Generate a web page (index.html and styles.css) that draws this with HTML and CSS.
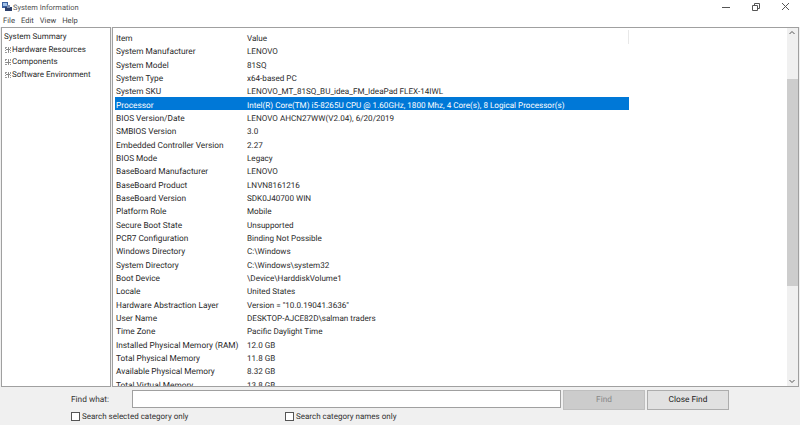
FILE: index.html
```html
<!DOCTYPE html>
<html lang="en">
<head>
  <meta charset="UTF-8">
  <title>System Information</title>
  <link rel="stylesheet" href="styles.css">
</head>
<body>
  <div class="window">
    <div class="titlebar">
      <svg class="app-icon" width="10" height="10" viewBox="0 0 10 10">
        <rect x="0" y="0" width="6" height="6" fill="#3a5f9e"/>
        <rect x="1" y="1" width="4" height="3" fill="#9fc0e8"/>
        <rect x="3" y="5" width="7" height="4" fill="#2c3f6b"/>
        <rect x="5" y="3" width="3" height="3" fill="#7d8fb0"/>
      </svg>
      <span class="title">System Information</span>
      <div class="win-controls">
        <svg width="10" height="10" viewBox="0 0 10 10"><path d="M1 5.500h8" stroke="#555" fill="none"/></svg>
        <svg width="10" height="10" viewBox="0 0 10 10"><path d="M1.500 3.500h5v5h-5zM3.500 3.500v-2h5v5h-2" stroke="#555" fill="none"/></svg>
        <svg width="10" height="10" viewBox="0 0 10 10"><path d="M1 1l7 7M8 1l-7 7" stroke="#555" fill="none"/></svg>
      </div>
    </div>

    <div class="menubar">
      <span>File</span><span>Edit</span><span>View</span><span>Help</span>
    </div>

    <div class="main">
      <div class="tree">
        <div class="tree-root">System Summary</div>
        <div class="tree-item"><span class="plus"></span>Hardware Resources</div>
        <div class="tree-item"><span class="plus"></span>Components</div>
        <div class="tree-item"><span class="plus"></span>Software Environment</div>
      </div>

      <div class="list">
        <div class="rows">
          <div class="row head"><span class="col-item">Item</span><span class="col-value">Value</span></div>
          <div class="row"><span class="col-item">System Manufacturer</span><span class="col-value">LENOVO</span></div>
          <div class="row"><span class="col-item">System Model</span><span class="col-value">81SQ</span></div>
          <div class="row"><span class="col-item">System Type</span><span class="col-value">x64-based PC</span></div>
          <div class="row"><span class="col-item">System SKU</span><span class="col-value">LENOVO_MT_81SQ_BU_idea_FM_IdeaPad FLEX-14IWL</span></div>
          <div class="row selected"><span class="col-item">Processor</span><span class="col-value">Intel(R) Core(TM) i5-8265U CPU @ 1.60GHz, 1800 Mhz, 4 Core(s), 8 Logical Processor(s)</span></div>
          <div class="row"><span class="col-item">BIOS Version/Date</span><span class="col-value">LENOVO AHCN27WW(V2.04), 6/20/2019</span></div>
          <div class="row"><span class="col-item">SMBIOS Version</span><span class="col-value">3.0</span></div>
          <div class="row"><span class="col-item">Embedded Controller Version</span><span class="col-value">2.27</span></div>
          <div class="row"><span class="col-item">BIOS Mode</span><span class="col-value">Legacy</span></div>
          <div class="row"><span class="col-item">BaseBoard Manufacturer</span><span class="col-value">LENOVO</span></div>
          <div class="row"><span class="col-item">BaseBoard Product</span><span class="col-value">LNVN8161216</span></div>
          <div class="row"><span class="col-item">BaseBoard Version</span><span class="col-value">SDK0J40700 WIN</span></div>
          <div class="row"><span class="col-item">Platform Role</span><span class="col-value">Mobile</span></div>
          <div class="row"><span class="col-item">Secure Boot State</span><span class="col-value">Unsupported</span></div>
          <div class="row"><span class="col-item">PCR7 Configuration</span><span class="col-value">Binding Not Possible</span></div>
          <div class="row"><span class="col-item">Windows Directory</span><span class="col-value">C:\Windows</span></div>
          <div class="row"><span class="col-item">System Directory</span><span class="col-value">C:\Windows\system32</span></div>
          <div class="row"><span class="col-item">Boot Device</span><span class="col-value">\Device\HarddiskVolume1</span></div>
          <div class="row"><span class="col-item">Locale</span><span class="col-value">United States</span></div>
          <div class="row"><span class="col-item">Hardware Abstraction Layer</span><span class="col-value">Version = "10.0.19041.3636"</span></div>
          <div class="row"><span class="col-item">User Name</span><span class="col-value">DESKTOP-AJCE82D\salman traders</span></div>
          <div class="row"><span class="col-item">Time Zone</span><span class="col-value">Pacific Daylight Time</span></div>
          <div class="row"><span class="col-item">Installed Physical Memory (RAM)</span><span class="col-value">12.0 GB</span></div>
          <div class="row"><span class="col-item">Total Physical Memory</span><span class="col-value">11.8 GB</span></div>
          <div class="row"><span class="col-item">Available Physical Memory</span><span class="col-value">8.32 GB</span></div>
          <div class="row"><span class="col-item">Total Virtual Memory</span><span class="col-value">13.8 GB</span></div>
        </div>
        <div class="scrollbar">
          <svg width="10" height="10" viewBox="0 0 10 10"><path d="M2.500 6l2.500-2.500 2.500 2.500" stroke="#555" fill="none"/></svg>
          <div class="track"><div class="thumb"></div></div>
          <svg width="10" height="10" viewBox="0 0 10 10"><path d="M2.500 4l2.500 2.500 2.500-2.500" stroke="#555" fill="none"/></svg>
        </div>
      </div>
    </div>

    <div class="findbar">
      <div class="find-top">
        <span class="find-label">Find what:</span>
        <div class="find-input"></div>
        <div class="btn btn-disabled">Find</div>
        <div class="btn">Close Find</div>
      </div>
      <div class="find-checks">
        <label class="check"><span class="box"></span>Search selected category only</label>
        <label class="check"><span class="box"></span>Search category names only</label>
      </div>
    </div>
  </div>
</body>
</html>
```

FILE: styles.css
```css
html, body {
  margin: 0;
  padding: 0;
}

body {
  background: #f0f0f0;
  color: #2a2a2a;
  font-family: Roboto, "Noto Sans", sans-serif;
  font-size: 8.3px;
  text-rendering: geometricPrecision;
  overflow: hidden;
}

.window {
  width: 800px;
  height: 425px;
  display: flex;
  flex-direction: column;
}

.titlebar {
  height: 14px;
  background: #fff;
  display: flex;
  align-items: center;
  padding-left: 2px;
  gap: 1px;
}
.title {
  color: #555;
  font-size: 7.500px;
  padding-top: 1px;
}
.win-controls {
  margin-left: auto;
  display: flex;
  gap: 20px;
  padding-right: 9px;
}

.menubar {
  height: 13px;
  background: #fff;
  display: flex;
  align-items: center;
  gap: 6px;
  padding-left: 3px;
  color: #444;
  font-size: 7.600px;
}

.main {
  flex: none;
  height: 360px;
  display: flex;
  gap: 1px;
  padding: 0 1px;
  background: #f0f0f0;
}

.tree {
  width: 110px;
  background: #fff;
  border: 1px solid #a0a0a0;
  box-sizing: border-box;
  padding: 3px 0 0 2px;
  font-size: 8px;
}
.tree-root {
  height: 12.500px;
  line-height: 12.500px;
}
.tree-item {
  height: 12.500px;
  line-height: 12.500px;
  display: flex;
  align-items: center;
  gap: 1px;
  padding-left: 1px;
}
.plus {
  width: 6px;
  height: 6px;
  border: 1px dotted #999;
  box-sizing: border-box;
  background: linear-gradient(#888, #888) center / 4px 1px no-repeat, linear-gradient(#888, #888) center / 1px 4px no-repeat;
}

.list {
  flex: 1;
  background: #fff;
  border: 1px solid #a0a0a0;
  display: flex;
  overflow: hidden;
}
.rows {
  flex: 1;
  padding: 2px 0 0 2px;
  overflow: hidden;
}
.row {
  width: 514px;
  height: 13.330px;
  line-height: 16.500px;
  display: flex;
  align-items: baseline;
  white-space: nowrap;
}
.col-item {
  width: 131px;
  padding-left: 1px;
  flex: none;
}
.col-value {
  font-size: 8.100px;
}
.head {
  position: relative;
}
.head::after {
  content: "";
  position: absolute;
  right: 0;
  top: 0;
  height: 14px;
  border-right: 1px solid #e8e8e8;
}
.selected {
  background: #0078d7;
  color: #fff;
}

.scrollbar {
  width: 11px;
  background: #f0f0f0;
  display: flex;
  flex-direction: column;
}
.track {
  flex: 1;
  padding-top: 41px;
  padding-bottom: 90px;
  display: flex;
}
.thumb {
  flex: 1;
  background: #cdcdcd;
}

.findbar {
  flex: 1;
  padding: 3px 0 0 71px;
}
.find-top {
  display: flex;
  align-items: flex-start;
}
.find-label {
  margin-top: 5px;
  width: 61px;
  color: #333;
}
.find-input {
  width: 427px;
  height: 16px;
  background: #fff;
  border: 1px solid #a0a0a0;
}
.btn {
  width: 80px;
  height: 18px;
  line-height: 18px;
  background: #e1e1e1;
  border: 1px solid #adadad;
  text-align: center;
  margin-left: 2px;
  color: #222;
}
.btn-disabled {
  background: #ccc;
  border-color: #bfbfbf;
  color: #888;
}
.find-checks {
  display: flex;
  margin-top: 2px;
}
.check {
  display: flex;
  align-items: center;
  gap: 2px;
  width: 214px;
  color: #333;
  font-size: 8px;
}
.box {
  width: 7px;
  height: 7px;
  background: #fff;
  border: 1px solid #555;
}
```
